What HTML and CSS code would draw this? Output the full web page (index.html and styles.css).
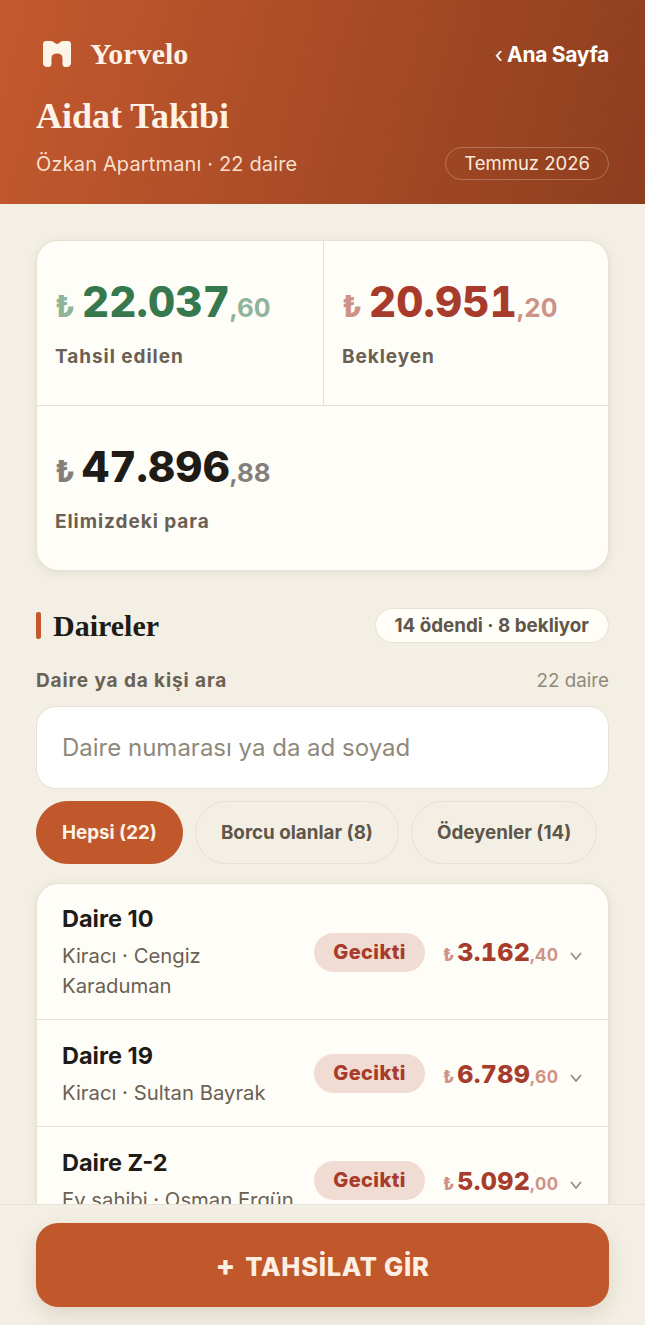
FILE: index.html
```html
<!DOCTYPE html>
<html lang="tr">
<head>
  <meta charset="UTF-8" />
  <meta name="viewport" content="width=device-width, initial-scale=1.0"/>
  <title>Aidat Takibi</title>
  <link rel="stylesheet" href="styles.css">
</head>
<body>
  <div class="page">
    <div class="scroll">
      <header class="hero">
        <div class="hero-top">
          <div class="brand">
            <svg class="brand-icon" viewBox="0 0 28 26" aria-hidden="true">
              <path d="M3 0H8C10.500 0 12 3 14 3C16 3 17.500 0 20 0H25C26.700 0 28 1.300 28 3V22C28 24.500 26 26 24 26H22.500C20.500 26 19.500 24.500 19.500 22.500V17C19.500 14 17.500 12.500 14 12.500C10.500 12.500 8.500 14 8.500 17V22.500C8.500 24.500 7.500 26 5.500 26H4C2 26 0 24.500 0 22V3C0 1.300 1.300 0 3 0Z"/>
            </svg>
            <span class="brand-name">Yorvelo</span>
          </div>
          <a class="home-link"><span class="home-arrow">‹</span> Ana Sayfa</a>
        </div>
        <h1>Aidat Takibi</h1>
        <div class="hero-bottom">
          <span class="hero-sub">Özkan Apartmanı · 22 daire</span>
          <span class="month">Temmuz 2026</span>
        </div>
      </header>

      <main class="main">
        <section class="stats">
          <div class="stat stat-left">
            <div class="amount green"><span class="cur">₺</span>22.037<span class="dec">,60</span></div>
            <div class="stat-label">Tahsil edilen</div>
          </div>
          <div class="stat">
            <div class="amount red"><span class="cur">₺</span>20.951<span class="dec">,20</span></div>
            <div class="stat-label">Bekleyen</div>
          </div>
          <div class="stat stat-wide">
            <div class="amount dark"><span class="cur">₺</span>47.896<span class="dec">,88</span></div>
            <div class="stat-label">Elimizdeki para</div>
          </div>
        </section>

        <div class="section-head">
          <h2>Daireler</h2>
          <span class="count-pill">14 ödendi · 8 bekliyor</span>
        </div>

        <div class="search-head">
          <label class="search-label" for="search">Daire ya da kişi ara</label>
          <span class="search-count">22 daire</span>
        </div>
        <input class="search" id="search" type="text" placeholder="Daire numarası ya da ad soyad">

        <div class="chips">
          <button class="chip chip-active">Hepsi (22)</button>
          <button class="chip">Borcu olanlar (8)</button>
          <button class="chip">Ödeyenler (14)</button>
        </div>

        <div class="list">
          <div class="row">
            <div class="who">
              <div class="flat">Daire 10</div>
              <div class="person">Kiracı · Cengiz Karaduman</div>
            </div>
            <span class="badge">Gecikti</span>
            <div class="debt"><span class="cur">₺</span>3.162<span class="dec">,40</span></div>
            <svg class="chev" viewBox="0 0 12 8" aria-hidden="true"><path d="M1 1L6 7L11 1"/></svg>
          </div>
          <div class="row">
            <div class="who">
              <div class="flat">Daire 19</div>
              <div class="person">Kiracı · Sultan Bayrak</div>
            </div>
            <span class="badge">Gecikti</span>
            <div class="debt"><span class="cur">₺</span>6.789<span class="dec">,60</span></div>
            <svg class="chev" viewBox="0 0 12 8" aria-hidden="true"><path d="M1 1L6 7L11 1"/></svg>
          </div>
          <div class="row">
            <div class="who">
              <div class="flat">Daire Z-2</div>
              <div class="person">Ev sahibi · Osman Ergün</div>
            </div>
            <span class="badge">Gecikti</span>
            <div class="debt"><span class="cur">₺</span>5.092<span class="dec">,00</span></div>
            <svg class="chev" viewBox="0 0 12 8" aria-hidden="true"><path d="M1 1L6 7L11 1"/></svg>
          </div>
        </div>
      </main>
    </div>

    <footer class="bottom">
      <button class="cta"><span class="cta-plus">+</span> TAHSİLAT GİR</button>
    </footer>
  </div>
</body>
</html>
```

FILE: styles.css
```css
* {
  box-sizing: border-box;
}

html, body {
  margin: 0;
  padding: 0;
  height: 100%;
  overflow: hidden;
}

body {
  font-family: Inter, "Noto Sans", sans-serif;
  color: #1f1b16;
  background-color: #f3efe4;
}

.page {
  display: flex;
  flex-direction: column;
  height: 100vh;
}

.scroll {
  flex: 1;
  min-height: 0;
  overflow: hidden;
}

/* header */
.hero {
  height: 204px;
  padding: 36px 36px 0;
  color: #fff;
  background: linear-gradient(105deg, #c4592e 0%, #8d3e1f 100%);
}

.hero-top,
.hero-bottom {
  display: flex;
  justify-content: space-between;
  align-items: center;
}

.brand {
  display: flex;
  align-items: center;
  gap: 19px;
  margin-left: 7px;
}

.brand-icon {
  width: 28px;
  height: 26px;
  fill: #fdf4e8;
}

.brand-name {
  font-family: "Liberation Serif", serif;
  font-size: 30px;
  font-weight: 700;
  line-height: 36px;
  color: #fdf2e6;
}

.home-link {
  font-size: 21px;
  font-weight: 700;
  letter-spacing: -0.3px;
}

.home-arrow {
  font-weight: 400;
}

h1 {
  margin: 22px 0 0;
  font-family: "Liberation Serif", serif;
  font-size: 36px;
  font-weight: 700;
  line-height: 44px;
  color: #fdf2e6;
}

.hero-bottom {
  margin-top: 9px;
}

.hero-sub {
  font-size: 20px;
  letter-spacing: 0.15px;
  color: #f8dfcb;
}

.month {
  display: inline-block;
  padding: 0 18px;
  height: 33px;
  line-height: 30px;
  font-size: 18.5px;
  color: #fbeadb;
  border: 1.5px solid rgba(255, 255, 255, 0.25);
  border-radius: 17px;
}

/* summary card */
.main {
  padding: 36px 36px 0;
}

.stats {
  display: grid;
  grid-template-columns: 287px 1fr;
  background-color: #fffdf8;
  border: 1px solid #e6e1d2;
  border-radius: 22px;
  box-shadow: 0 2px 10px rgba(90, 70, 40, 0.1);
  overflow: hidden;
}

.stat {
  height: 164px;
  padding: 36px 18px 0;
}

.stat-left {
  border-right: 1px solid #e6e1d2;
}

.stat-wide {
  grid-column: 1 / 3;
  height: 165px;
  border-top: 1px solid #e6e1d2;
}

.amount {
  font-size: 42px;
  font-weight: 800;
  font-variant-numeric: tabular-nums;
  line-height: 50px;
  letter-spacing: 0.2px;
  white-space: nowrap;
}

.amount .cur {
  margin-right: 7px;
  font-size: 30px;
  opacity: 0.55;
  letter-spacing: 0;
}

.amount .dec {
  font-size: 26px;
  font-weight: 700;
  letter-spacing: 0;
  opacity: 0.55;
}

.green { color: #36794f; }
.red { color: #a83c2c; }
.dark { color: #1f1b16; }

.stat-label {
  margin-top: 12px;
  font-size: 19px;
  font-weight: 700;
  letter-spacing: 0.95px;
  color: #6a6053;
}

/* section head */
.section-head {
  display: flex;
  justify-content: space-between;
  align-items: center;
  margin-top: 37px;
}

h2 {
  display: flex;
  align-items: center;
  gap: 12px;
  margin: 0;
  font-family: "Liberation Serif", serif;
  font-size: 30px;
  font-weight: 700;
  line-height: 34px;
}

h2::before {
  content: "";
  width: 5px;
  height: 27px;
  background-color: #c4592e;
  border-radius: 2px;
}

.count-pill {
  height: 35px;
  padding: 0 19px;
  line-height: 33px;
  font-size: 18.8px;
  font-weight: 700;
  color: #5f564a;
  background-color: #fffdf8;
  border: 1px solid #e6e1d2;
  border-radius: 18px;
}

.search-head {
  display: flex;
  justify-content: space-between;
  align-items: center;
  margin-top: 26px;
}

.search-label {
  font-size: 19px;
  font-weight: 700;
  letter-spacing: 0.9px;
  color: #6a6053;
}

.search-count {
  font-size: 18.8px;
  color: #8f887b;
}

.search {
  display: block;
  width: 100%;
  height: 83px;
  margin-top: 14px;
  padding: 0 25px;
  font-family: Inter, "Noto Sans", sans-serif;
  font-size: 24px;
  background-color: #fff;
  border: 1px solid #e6e1d2;
  border-radius: 20px;
}

.search::placeholder {
  color: #8f887b;
}

.chips {
  display: flex;
  gap: 12px;
  margin-top: 12px;
}

.chip {
  height: 63px;
  padding: 0 25px;
  font-family: Inter, "Noto Sans", sans-serif;
  font-size: 18.8px;
  font-weight: 700;
  color: #5f564a;
  background-color: transparent;
  border: 1px solid #e6e1d2;
  border-radius: 32px;
}

.chip-active {
  color: #fdf2e6;
  background-color: #c0582c;
  border-color: #c0582c;
}

/* flat list */
.list {
  margin-top: 19px;
  background-color: #fffdf8;
  border: 1px solid #e6e1d2;
  border-radius: 22px 22px 0 0;
  box-shadow: 0 2px 10px rgba(90, 70, 40, 0.1);
}

.row {
  display: flex;
  align-items: center;
  min-height: 107px;
  padding: 19px 26px 18px 25px;
  border-bottom: 1px solid #e6e1d2;
}

.who {
  flex: 1;
  min-width: 0;
}

.flat {
  font-size: 23.5px;
  font-weight: 700;
  line-height: 32px;
}

.person {
  margin-top: 6px;
  font-size: 20.3px;
  line-height: 30px;
  color: #6a6053;
}

.badge {
  flex-shrink: 0;
  width: 111px;
  height: 39px;
  margin-left: 12px;
  line-height: 38px;
  text-align: center;
  font-size: 20px;
  font-weight: 800;
  letter-spacing: 0.4px;
  color: #a83c2c;
  background-color: #f1dcd3;
  border-radius: 20px;
}

.debt {
  flex-shrink: 0;
  width: 115px;
  margin-left: 18px;
  font-size: 25px;
  font-weight: 800;
  font-variant-numeric: tabular-nums;
  letter-spacing: 0.3px;
  color: #a83c2c;
  white-space: nowrap;
}

.debt .cur {
  margin-right: 3px;
  font-size: 17px;
  opacity: 0.55;
  letter-spacing: 0;
}

.debt .dec {
  font-size: 17.5px;
  font-weight: 700;
  letter-spacing: 0.3px;
  opacity: 0.55;
}

.chev {
  flex-shrink: 0;
  width: 12px;
  height: 8px;
  margin-left: 12px;
  margin-top: 8px;
  fill: none;
  stroke: #8f887b;
  stroke-width: 1.6;
}

/* bottom bar */
.bottom {
  flex-shrink: 0;
  height: 121px;
  padding: 18px 36px 0;
  background-color: #f3efe4;
  border-top: 1px solid #e6e1d2;
}

.cta {
  display: block;
  width: 100%;
  height: 84px;
  font-family: Inter, "Noto Sans", sans-serif;
  font-size: 25.5px;
  font-weight: 800;
  letter-spacing: 0.7px;
  color: #fdf0e2;
  background-color: #c0582c;
  border: none;
  border-radius: 22px;
  box-shadow: 0 8px 20px rgba(90, 60, 30, 0.14);
}

.cta-plus {
  margin-right: 3px;
  font-size: 29px;
}
```
